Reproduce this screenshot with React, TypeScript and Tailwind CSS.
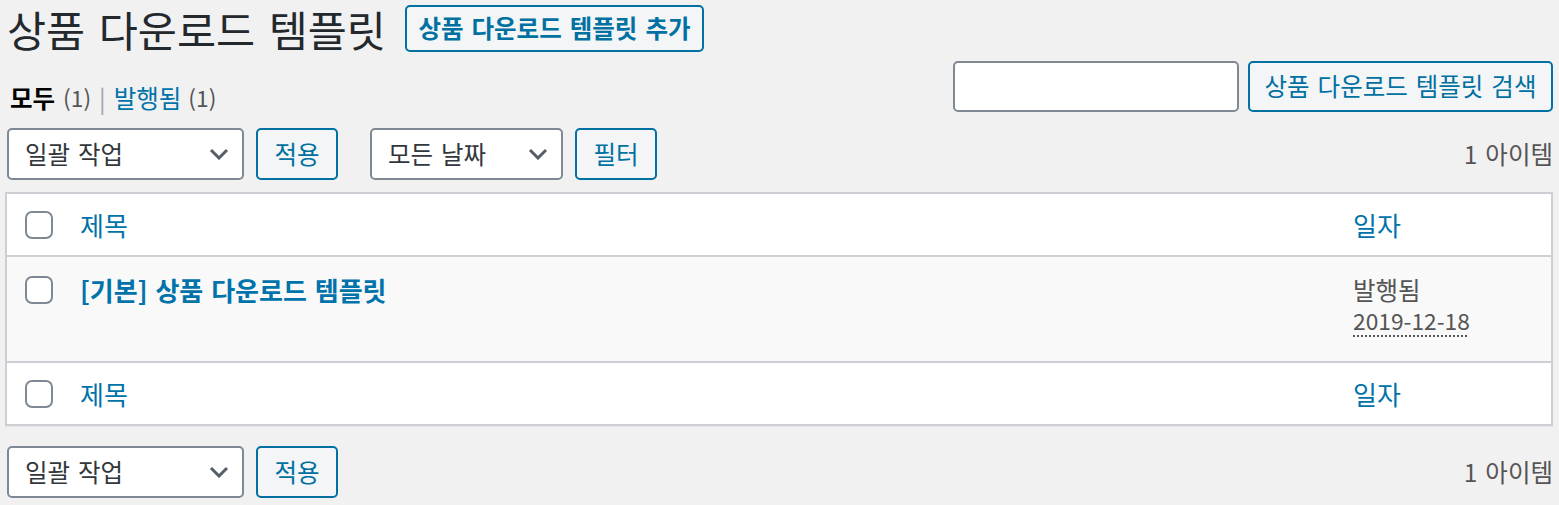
import type { ReactNode } from "react"

function Chevron() {
  return (
    <svg width="20" height="12" viewBox="0 0 20 12" className="shrink-0">
      <polyline points="2,2 10,10 18,2" fill="none" stroke="#555d66" strokeWidth="3" />
    </svg>
  )
}

function Select({ label, className }: { label: string; className: string }) {
  return (
    <div
      className={`flex h-[52px] items-center justify-between rounded-[5px] border-2 border-[#7e8993] bg-white pl-[16px] pr-[13px] text-[#32373c] ${className}`}
    >
      <span>{label}</span>
      <Chevron />
    </div>
  )
}

function Button({ children, className }: { children: ReactNode; className: string }) {
  return (
    <div
      className={`flex items-center justify-center rounded-[5px] border-2 border-[#0071a1] bg-[#f3f5f6] text-[#0071a1] ${className}`}
    >
      {children}
    </div>
  )
}

function Checkbox({ className }: { className: string }) {
  return <div className={`h-[28px] w-[28px] shrink-0 rounded-[7px] border-2 border-[#7e8993] bg-white ${className}`} />
}

function TableNav({ withDate }: { withDate?: boolean }) {
  return (
    <div className="flex h-[52px] items-center">
      <Select label="일괄 작업" className="ml-[2px] w-[237px]" />
      <Button className="ml-[12px] h-[52px] w-[82px]">적용</Button>
      {withDate && (
        <>
          <Select label="모든 날짜" className="ml-[32px] w-[193px]" />
          <Button className="ml-[12px] h-[52px] w-[82px]">필터</Button>
        </>
      )}
      <div className="ml-auto text-[#555]">1 아이템</div>
    </div>
  )
}

function HeaderRow({ bottom }: { bottom?: boolean }) {
  return (
    <div className={`flex h-[63px] items-center ${bottom ? "border-t-2 border-[#ccd0d4]" : "border-b-2 border-[#ccd0d4]"}`}>
      <Checkbox className="ml-[18px]" />
      <div className="ml-[27px] flex-1 text-[26px] text-[#0073aa]">제목</div>
      <div className="w-[198px] text-[26px] text-[#0073aa]">일자</div>
    </div>
  )
}

export default function App() {
  return (
    <div className="min-h-[505px] bg-[#f1f1f1] pl-[5px] pr-[6px] pt-[5px] font-['Noto_Sans_CJK_KR','Noto_Sans',sans-serif] text-[24.5px] text-[#444] [word-spacing:2.5px]">
      {/* Title */}
      <div className="flex h-[47px] items-center">
        <h1 className="ml-[2px] text-[42.5px] font-normal text-[#23282d] [word-spacing:4px]">상품 다운로드 템플릿</h1>
        <Button className="ml-[19px] h-[47px] w-[299px] font-semibold">상품 다운로드 템플릿 추가</Button>
      </div>

      {/* Views + search */}
      <div className="mt-[9px] flex h-[51px] items-start justify-between">
        <div className="flex items-center pl-[5px] pt-[22px] leading-[29px]">
          <span className="font-semibold text-black">모두</span>
          <span className="ml-[8px] text-[22.75px] text-[#555]">(1)</span>
          <span className="mx-[8px] text-[#a0a5aa]">|</span>
          <span className="text-[#0073aa]">발행됨</span>
          <span className="ml-[7px] text-[22.75px] text-[#555]">(1)</span>
        </div>
        <div className="flex items-center">
          <div className="h-[51px] w-[286px] rounded-[5px] border-2 border-[#7e8993] bg-white" />
          <Button className="ml-[9px] h-[51px] w-[305px]">상품 다운로드 템플릿 검색</Button>
        </div>
      </div>

      <div className="mt-[16px]">
        <TableNav withDate />
      </div>

      {/* List table */}
      <div className="mt-[12px] border-2 border-[#ccd0d4] bg-white shadow-[0_1px_1px_rgba(0,0,0,0.04)]">
        <HeaderRow />
        <div className="flex h-[104px] items-start bg-[#f9f9f9]">
          <Checkbox className="ml-[18px] mt-[19px]" />
          <div className="ml-[27px] flex-1 pt-[16px] text-[26px] font-semibold leading-[33px] text-[#0073aa] [word-spacing:2px]">
            [기본] 상품 다운로드 템플릿
          </div>
          <div className="w-[198px] pt-[16px] leading-[33px] text-[#555]">
            <div>발행됨</div>
            <div className="-mt-[3px]">
              <span className="text-[22.75px] underline decoration-dotted decoration-[2px] underline-offset-[5px]">
                2019-12-18
              </span>
            </div>
          </div>
        </div>
        <HeaderRow bottom />
      </div>

      <div className="mt-[20px]">
        <TableNav />
      </div>
    </div>
  )
}
